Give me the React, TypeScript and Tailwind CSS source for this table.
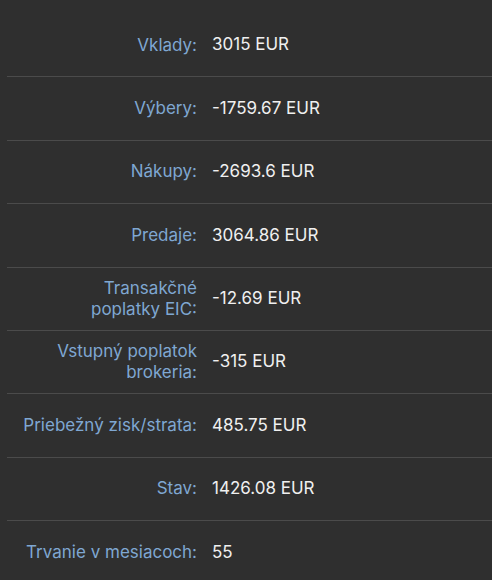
import { Fragment } from "react"

const rows: { label: string[]; value: string }[] = [
  { label: ["Vklady:"], value: "3015 EUR" },
  { label: ["Výbery:"], value: "-1759.67 EUR" },
  { label: ["Nákupy:"], value: "-2693.6 EUR" },
  { label: ["Predaje:"], value: "3064.86 EUR" },
  { label: ["Transakčné", "poplatky EIC:"], value: "-12.69 EUR" },
  { label: ["Vstupný poplatok", "brokeria:"], value: "-315 EUR" },
  { label: ["Priebežný zisk/strata:"], value: "485.75 EUR" },
  { label: ["Stav:"], value: "1426.08 EUR" },
  { label: ["Trvanie v mesiacoch:"], value: "55" },
]

export default function App() {
  return (
    <div
      className="w-[492px] h-[580px] overflow-hidden bg-[#2f2f2f] pt-[14px]"
      style={{ fontFamily: "Inter, 'Noto Sans', sans-serif" }}
    >
      {rows.map((r, i) => (
        <div
          key={r.value}
          className={
            "ml-[7px] flex items-center h-[63.4px] " +
            (i < rows.length - 1 ? "border-b border-[#4b4b4b]" : "")
          }
        >
          <div className="w-[190px] shrink-0 pl-3 text-right text-[17px] leading-[21px] text-[#7fa7d2]">
            {r.label.map((l, j) => (
              <Fragment key={l}>
                {j > 0 && <br />}
                {l}
              </Fragment>
            ))}
          </div>
          <div className="pl-[15px] text-[17px] text-[#f0f0f0]">{r.value}</div>
        </div>
      ))}
    </div>
  )
}
